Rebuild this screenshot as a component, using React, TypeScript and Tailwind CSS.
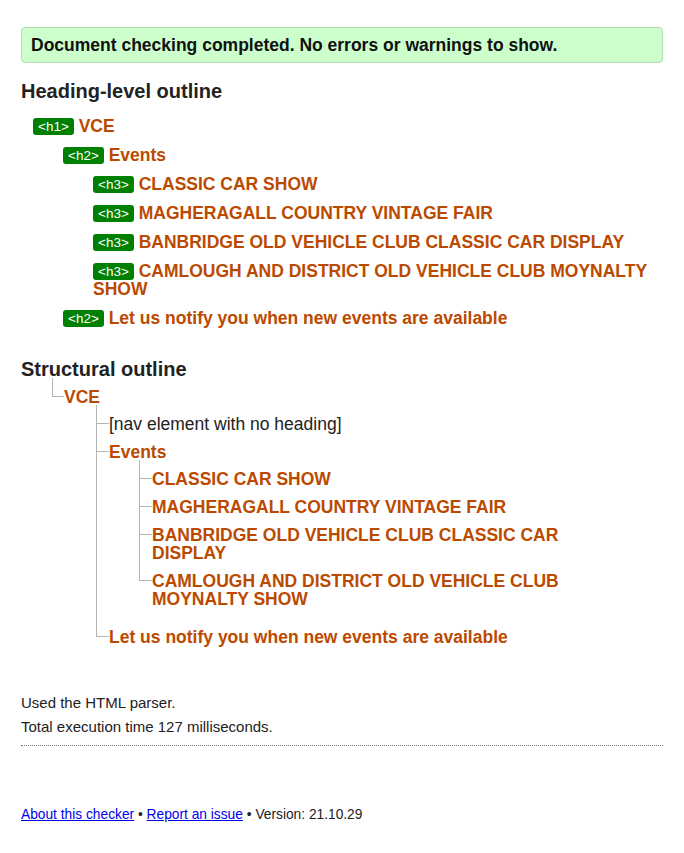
type HeadingItem = {
  level: number;
  text: string;
};

type TreeNode = {
  text: string;
  heading?: boolean;
  children?: TreeNode[];
};

const headings: HeadingItem[] = [
  { level: 1, text: "VCE" },
  { level: 2, text: "Events" },
  { level: 3, text: "CLASSIC CAR SHOW" },
  { level: 3, text: "MAGHERAGALL COUNTRY VINTAGE FAIR" },
  { level: 3, text: "BANBRIDGE OLD VEHICLE CLUB CLASSIC CAR DISPLAY" },
  { level: 3, text: "CAMLOUGH AND DISTRICT OLD VEHICLE CLUB MOYNALTY SHOW" },
  { level: 2, text: "Let us notify you when new events are available" },
];

const structure: TreeNode[] = [
  {
    text: "VCE",
    heading: true,
    children: [
      { text: "[nav element with no heading]" },
      {
        text: "Events",
        heading: true,
        children: [
          { text: "CLASSIC CAR SHOW", heading: true },
          { text: "MAGHERAGALL COUNTRY VINTAGE FAIR", heading: true },
          { text: "BANBRIDGE OLD VEHICLE CLUB CLASSIC CAR DISPLAY", heading: true },
          { text: "CAMLOUGH AND DISTRICT OLD VEHICLE CLUB MOYNALTY SHOW", heading: true },
        ],
      },
      { text: "Let us notify you when new events are available", heading: true },
    ],
  },
];

const indentClass: Record<number, string> = {
  1: "pl-[12px]",
  2: "pl-[42px]",
  3: "pl-[72px]",
};

const treeIndent = ["pl-[31px]", "-mt-[1px] pl-[32px] pb-[10px]", "-mt-[1px] pl-[30px] pb-[10px]"];

function Tree({ nodes, depth }: { nodes: TreeNode[]; depth: number }) {
  return (
    <ul className={treeIndent[depth]}>
      {nodes.map((node, i) => {
        const last = i === nodes.length - 1;
        // connector: "└" on the last child, "├" on the others (li border carries the line on)
        const tick =
          depth === 0
            ? last
              ? "w-[12px] border-l"
              : "w-[11px]"
            : last
              ? "w-[13px] border-l"
              : "w-[12px]";
        return (
          <li
            key={node.text}
            className={`flex ${last ? "" : "border-l border-[#b4b4b4]"}`}
          >
            <div className={`h-[19px] shrink-0 border-b border-[#b4b4b4] ${tick}`} />
            <div className="pt-[10px]">
              <div
                className={
                  node.heading
                    ? "max-w-[450px] font-bold text-[#bb4a00]"
                    : "text-[#222]"
                }
              >
                {node.text}
              </div>
              {node.children && <Tree nodes={node.children} depth={depth + 1} />}
            </div>
          </li>
        );
      })}
    </ul>
  );
}

export default function App() {
  return (
    <div className="min-h-screen bg-white px-[21px] pt-[27px] pb-8 font-['Liberation_Sans',Arial,sans-serif] text-[17.5px] leading-[18px] text-[#222]">
      <div className="rounded-[4px] border border-[#b5dcb5] bg-[#ccffcc] px-[9px] py-[8px] font-bold text-[#111]">
        Document checking completed. No errors or warnings to show.
      </div>

      <h2 className="mt-[16px] text-[20px] font-bold leading-[24px] text-[#222]">
        Heading-level outline
      </h2>
      <ul className="mt-[14px]">
        {headings.map((h, i) => (
          <li
            key={i}
            className={`${indentClass[h.level]} ${i === 0 ? "" : "mt-[11px]"} font-bold text-[#bb4a00]`}
          >
            <span className="inline-block rounded-[3px] bg-[#008000] px-[5px] align-[1px] text-[13.5px] leading-[17px] font-normal text-white">
              {`<h${h.level}>`}
            </span>{" "}
            {h.text}
          </li>
        ))}
      </ul>

      <h2 className="mt-[30px] text-[20px] font-bold leading-[24px] text-[#222]">
        Structural outline
      </h2>
      <div className="-mt-[3px]">
        <Tree nodes={structure} depth={0} />
      </div>

      <div className="mt-[39px] text-[15px] leading-[16px] text-[#222]">
        <p>Used the HTML parser.</p>
        <p className="mt-[8px]">Total execution time 127 milliseconds.</p>
      </div>
      <div className="mt-[10px] border-t border-dotted border-[#777]" />

      <p className="mt-[61px] text-[13.75px] leading-[16px] text-[#222]">
        <a href="#" className="text-[#0000ee] underline">
          About this checker
        </a>{" "}
        •{" "}
        <a href="#" className="text-[#0000ee] underline">
          Report an issue
        </a>{" "}
        • Version: 21.10.29
      </p>
    </div>
  );
}
